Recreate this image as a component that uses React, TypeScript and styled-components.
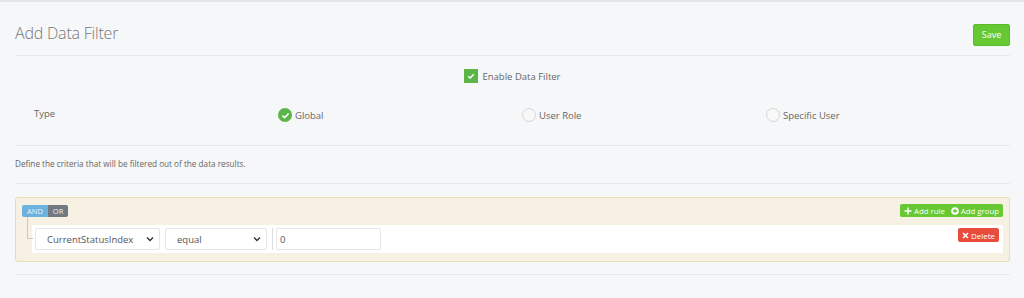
import * as React from 'react';
import styled, {createGlobalStyle} from 'styled-components';

const GlobalStyle = createGlobalStyle`
  html, body {
    margin: 0;
    padding: 0;
    background: #f6f7f9;
  }
  body {
    font-family: "Open Sans", "Noto Sans", sans-serif;
    color: #666;
  }
`;

const Page = styled.div`
  border-top: 2px solid #e4e5e8;
  padding: 0 14px 0 15px;
  height: 296px;
  box-sizing: border-box;
`;

const Header = styled.div`
  display: flex;
  justify-content: space-between;
  align-items: center;
  height: 54px;
  box-sizing: border-box;
  padding-top: 12px;
  border-bottom: 1px solid #e8e9ec;
`;

const Title = styled.h2`
  margin: 0;
  font-size: 16px;
  font-weight: 300;
  color: #777;
  letter-spacing: -0.2px;
  padding-bottom: 4px;
`;

const SaveButton = styled.button`
  background: #66c832;
  color: #fff;
  border: 1px solid #5bbb2a;
  border-radius: 2px;
  font-family: inherit;
  font-size: 9px;
  width: 37px;
  height: 22px;
  padding: 0;
`;

const EnableRow = styled.div`
  display: flex;
  justify-content: center;
  align-items: center;
  gap: 4px;
  height: 40px;
  font-size: 9.5px;
  color: #666;
`;

const CheckBox = styled.span`
  width: 14px;
  height: 14px;
  background: #5cb547;
  display: inline-flex;
  align-items: center;
  justify-content: center;
`;

const TypeRow = styled.div`
  display: grid;
  grid-template-columns: repeat(4, 1fr);
  align-items: center;
  padding-left: 19px;
  padding-bottom: 11px;
  height: 50px;
  box-sizing: border-box;
  border-bottom: 1px solid #e8e9ec;
  font-size: 9.5px;
  color: #666;
`;

const TypeLabel = styled.div`
  padding-bottom: 3px;
`;

const RadioOption = styled.label`
  display: flex;
  align-items: center;
  gap: 3px;
`;

const RadioCircle = styled.span<{ $checked?: boolean }>`
  width: 14px;
  height: 14px;
  border-radius: 50%;
  box-sizing: border-box;
  display: inline-flex;
  align-items: center;
  justify-content: center;
  background: ${p => (p.$checked ? '#5cb547' : '#f8f8f8')};
  border: ${p => (p.$checked ? 'none' : '1px solid #d6d6d6')};
`;

const Hint = styled.div`
  font-size: 8.2px;
  color: #666;
  height: 38px;
  padding-bottom: 3px;
  box-sizing: border-box;
  display: flex;
  align-items: center;
  border-bottom: 1px solid #e8e9ec;
`;

const GroupBox = styled.div`
  margin-top: 13px;
  background: #f6f1e2;
  border: 1px solid #eadcb4;
  border-radius: 3px;
  padding: 6px 6px 7px 6px;
  height: 65px;
  box-sizing: border-box;
`;

const GroupHeader = styled.div`
  display: flex;
  justify-content: space-between;
  align-items: center;
`;

const Conjunctions = styled.div`
  display: flex;
  border-radius: 2px;
  overflow: hidden;
`;

const ConjButton = styled.span<{ $active?: boolean }>`
  height: 12px;
  display: inline-flex;
  align-items: center;
  padding: 0 5px;
  font-size: 7.5px;
  color: #eef4f8;
  background: ${p => (p.$active ? '#6cb2de' : '#727981')};
`;

const ActionGroup = styled.div`
  display: flex;
  background: #66c832;
  border-radius: 2px;
  height: 13px;
  align-items: center;
  padding: 0 4px;
  gap: 6px;
`;

const ActionButton = styled.span`
  display: inline-flex;
  align-items: center;
  gap: 2px;
  font-size: 7.8px;
  color: #fff;
`;

const RuleArea = styled.div`
  position: relative;
  padding-left: 10px;
  margin-top: 8px;
`;

const Connector = styled.span`
  position: absolute;
  left: 5px;
  top: -8px;
  width: 5px;
  height: 21px;
  border-left: 1px solid #c8c8c8;
  border-bottom: 1px solid #c8c8c8;
`;

const RuleRow = styled.div`
  background: #fff;
  height: 28px;
  display: flex;
  align-items: flex-start;
  padding: 3px 3px 0 3px;
  box-sizing: border-box;
`;

const Select = styled.div<{ $width: number }>`
  width: ${p => p.$width}px;
  height: 22px;
  box-sizing: border-box;
  border: 1px solid #e6e6e6;
  border-radius: 2px;
  display: flex;
  align-items: center;
  justify-content: space-between;
  padding: 0 5px 0 11px;
  font-size: 9.5px;
  color: #555;
  margin-right: 5px;
`;

const Divider = styled.span`
  width: 1px;
  height: 22px;
  background: #ddd;
  margin-right: 3px;
`;

const ValueInput = styled.div`
  width: 105px;
  height: 22px;
  box-sizing: border-box;
  border: 1px solid #e6e6e6;
  border-radius: 2px;
  display: flex;
  align-items: center;
  padding-left: 3px;
  font-size: 9.5px;
  color: #555;
`;

const DeleteButton = styled.span`
  margin-left: auto;
  margin-right: 1px;
  background: #e74c3c;
  border-radius: 2px;
  height: 14px;
  width: 41px;
  box-sizing: border-box;
  display: inline-flex;
  align-items: center;
  justify-content: center;
  gap: 2px;
  font-size: 8px;
  color: #fff;
`;

const BottomLine = styled.div`
  margin-top: 12px;
  border-bottom: 1px solid #e8e9ec;
`;

const Chevron = () => (
    <svg width="8" height="6" viewBox="0 0 8 6">
        <path d="M1 1.5 L4 4.5 L7 1.5" fill="none" stroke="#333" strokeWidth="1.4"/>
    </svg>
);

const Tick = ({size}: { size: number }) => (
    <svg width={size} height={size} viewBox="0 0 10 10">
        <path d="M2.2 5.2 L4.2 7 L7.8 3.2" fill="none" stroke="#fff" strokeWidth="1.5"/>
    </svg>
);

export default function App() {
    return (
        <>
            <GlobalStyle/>
            <Page>
                <Header>
                    <Title>Add Data Filter</Title>
                    <SaveButton>Save</SaveButton>
                </Header>
                <EnableRow>
                    <CheckBox><Tick size={10}/></CheckBox>
                    Enable Data Filter
                </EnableRow>
                <TypeRow>
                    <TypeLabel>Type</TypeLabel>
                    <RadioOption><RadioCircle $checked><Tick size={11}/></RadioCircle>Global</RadioOption>
                    <RadioOption><RadioCircle/>User Role</RadioOption>
                    <RadioOption><RadioCircle/>Specific User</RadioOption>
                </TypeRow>
                <Hint>Define the criteria that will be filtered out of the data results.</Hint>
                <GroupBox>
                    <GroupHeader>
                        <Conjunctions>
                            <ConjButton $active>AND</ConjButton>
                            <ConjButton>OR</ConjButton>
                        </Conjunctions>
                        <ActionGroup>
                            <ActionButton>
                                <svg width="8" height="8" viewBox="0 0 8 8">
                                    <path d="M4 0.5 V7.5 M0.5 4 H7.5" stroke="#fff" strokeWidth="1.5"/>
                                </svg>
                                Add rule
                            </ActionButton>
                            <ActionButton>
                                <svg width="8" height="8" viewBox="0 0 8 8">
                                    <circle cx="4" cy="4" r="3.8" fill="#fff"/>
                                    <path d="M4 2 V6 M2 4 H6" stroke="#66c832" strokeWidth="1.3"/>
                                </svg>
                                Add group
                            </ActionButton>
                        </ActionGroup>
                    </GroupHeader>
                    <RuleArea>
                        <Connector/>
                        <RuleRow>
                            <Select $width={125}>CurrentStatusIndex<Chevron/></Select>
                            <Select $width={102}>equal<Chevron/></Select>
                            <Divider/>
                            <ValueInput>0</ValueInput>
                            <DeleteButton>
                                <svg width="7" height="7" viewBox="0 0 7 7">
                                    <path d="M1 1 L6 6 M6 1 L1 6" stroke="#fff" strokeWidth="1.6"/>
                                </svg>
                                Delete
                            </DeleteButton>
                        </RuleRow>
                    </RuleArea>
                </GroupBox>
                <BottomLine/>
            </Page>
        </>
    );
}
